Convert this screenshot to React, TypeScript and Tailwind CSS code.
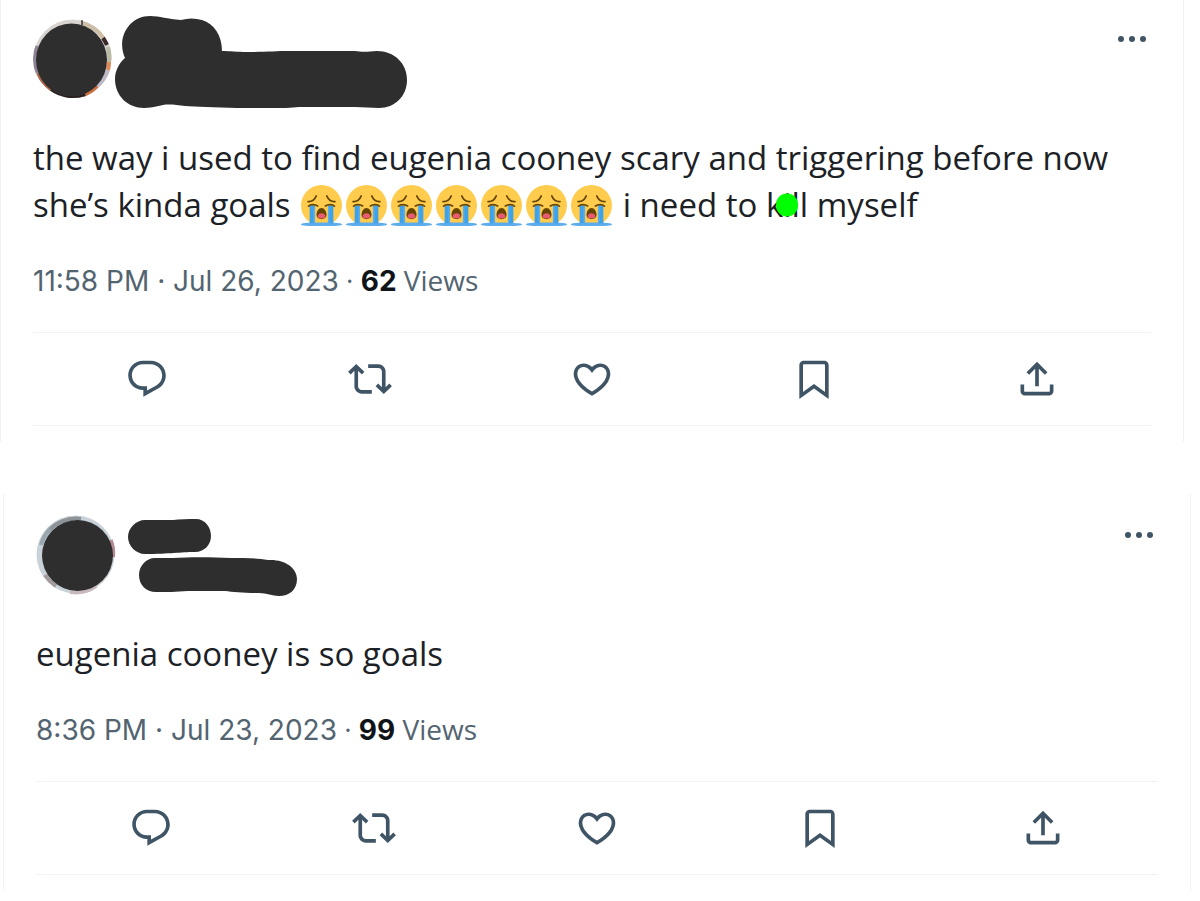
import React from "react";

const ICONS = {
  reply:
    "M1.751 10c0-4.42 3.584-8 8.005-8h4.366c4.49 0 8.129 3.64 8.129 8.13 0 2.96-1.607 5.68-4.196 7.11l-8.054 4.46v-3.69h-.067c-4.49.1-8.183-3.51-8.183-8.01zm8.005-6c-3.317 0-6.005 2.69-6.005 6 0 3.37 2.77 6.08 6.138 6.01l.351-.01h1.761v2.3l5.087-2.81c1.951-1.08 3.163-3.13 3.163-5.36 0-3.39-2.744-6.13-6.129-6.13H9.756z",
  repost:
    "M4.5 3.88l4.432 4.14-1.364 1.46L5.5 7.55V16c0 1.1.896 2 2 2H13v2H7.5c-2.209 0-4-1.79-4-4V7.55L1.432 9.48.068 8.02 4.5 3.88zM16.5 6H11V4h5.5c2.209 0 4 1.79 4 4v8.45l2.068-1.93 1.364 1.46-4.432 4.14-4.432-4.14 1.364-1.46 2.068 1.93V8c0-1.1-.896-2-2-2z",
  like: "M16.697 5.5c-1.222-.06-2.679.51-3.89 2.16l-.805 1.09-.806-1.09C9.984 6.01 8.526 5.44 7.304 5.5c-1.243.07-2.349.78-2.91 1.91-.552 1.12-.633 2.78.479 4.82 1.074 1.97 3.257 4.27 7.129 6.61 3.87-2.34 6.052-4.64 7.126-6.61 1.111-2.04 1.03-3.7.477-4.82-.561-1.13-1.666-1.84-2.908-1.91zm4.187 7.69c-1.351 2.48-4.001 5.12-8.379 7.67l-.503.3-.504-.3c-4.379-2.55-7.029-5.19-8.382-7.67-1.36-2.5-1.41-4.86-.514-6.67.887-1.79 2.647-2.91 4.601-3.01 1.651-.09 3.368.56 4.798 2.01 1.429-1.45 3.146-2.1 4.796-2.01 1.954.1 3.714 1.22 4.601 3.01.896 1.81.846 4.17-.514 6.67z",
  bookmark:
    "M4 4.5C4 3.12 5.119 2 6.5 2h11C18.881 2 20 3.12 20 4.5v18.44l-8-5.71-8 5.71V4.5zM6.5 4c-.276 0-.5.22-.5.5v14.56l6-4.29 6 4.29V4.5c0-.28-.224-.5-.5-.5h-11z",
  share:
    "M12 2.59l5.7 5.7-1.41 1.42L13 6.41V16h-2V6.41l-3.3 3.3-1.41-1.42L12 2.59zM21 15l-.02 3.51c0 1.38-1.12 2.49-2.5 2.49H5.5C4.11 21 3 19.88 3 18.5V15h2v3.5c0 .28.22.5.5.5h12.98c.28 0 .5-.22.5-.5L19 15h2z",
};

const ACTIONS = [
  { label: "Reply", path: ICONS.reply },
  { label: "Repost", path: ICONS.repost },
  { label: "Like", path: ICONS.like },
  { label: "Bookmark", path: ICONS.bookmark },
  { label: "Share", path: ICONS.share },
];

const SobEmoji: React.FC = () => (
  <svg viewBox="0 0 36 36" role="img" aria-label="loudly crying face" className="mx-[2px] mt-1 inline-block h-[41px] w-[41px] align-top">
    <circle cx="18" cy="18" r="18" fill="#ffcc4d" />
    <path d="M0 34.6C0 33.6 5 33 18 33s18 .6 18 1.6S31 36 18 36 0 35.6 0 34.6z" fill="#5dadec" />
    <path d="M7.6 18h4.6v15.6H7.6zM23.8 18h4.6v15.6h-4.6z" fill="#3ea2ea" />
    <path d="M11 19h1.4v14.4H11zM23.6 19H25v14.4h-1.4z" fill="#5dadec" />
    <path
      d="M6.2 14.6c3 .2 5.8-1.8 7.2-5M29.8 14.6c-3 .2-5.8-1.8-7.2-5M6.6 18.6c1.6-1.9 5.6-1.9 8-.2M29.4 18.6c-1.6-1.9-5.6-1.9-8-.2"
      fill="none"
      stroke="#664500"
      strokeWidth="1.5"
      strokeLinecap="round"
    />
    <path d="M18 20.2c-2.6 0-4.4 3-4.4 6.2 0 2.4 1.8 3.6 4.4 3.6s4.4-1.2 4.4-3.6c0-3.2-1.8-6.2-4.4-6.2z" fill="#664500" />
    <path d="M18 24.8c-2 0-3.4 1.2-3.4 2.6s1.4 2 3.4 2 3.4-.6 3.4-2-1.4-2.6-3.4-2.6z" fill="#e75a70" />
  </svg>
);

const WarmAvatar: React.FC = () => (
  <svg viewBox="0 0 80 80" className="h-20 w-20 shrink-0 rounded-full" aria-hidden="true">
    <circle cx="39.5" cy="39.5" r="39" fill="#d9d4d0" />
    <g fill="none" strokeWidth="4">
      <path d="M49 4A37 37 0 0 1 71 20" stroke="#cdbfa6" />
      <path d="M70 19A37 37 0 0 1 74 26" stroke="#3a2a26" />
      <path d="M75 28A37 37 0 0 1 76 44" stroke="#b9b9a4" />
      <path d="M76 43A37 37 0 0 1 75 51" stroke="#e08a55" />
      <path d="M75 51A37 37 0 0 1 63 68" stroke="#bdb8c4" />
      <path d="M64 67A37 37 0 0 1 50 76" stroke="#c9703f" />
      <path d="M52 75A37 37 0 0 1 18 70" stroke="#2a2020" />
      <path d="M18 70A37 37 0 0 1 5 54" stroke="#b06a4c" />
      <path d="M4 54A37 37 0 0 1 4 27" stroke="#8f8294" />
      <path d="M49 1v5" stroke="#333" strokeWidth="1.5" />
    </g>
    <ellipse cx="38.5" cy="41" rx="35.5" ry="36.5" fill="#2e2e2e" />
  </svg>
);

const CoolAvatar: React.FC = () => (
  <svg viewBox="0 0 80 80" className="h-20 w-20 shrink-0 rounded-full" aria-hidden="true">
    <circle cx="39.5" cy="39.5" r="39" fill="#c9d2d8" />
    <g fill="none" strokeWidth="4">
      <path d="M11 18A36 36 0 0 1 45 4" stroke="#8d9396" />
      <path d="M5 30A36 36 0 0 1 14 14" stroke="#9aa6ad" />
      <path d="M75 25A37 37 0 0 1 77 42" stroke="#b58a94" />
      <path d="M20 71A37 37 0 0 1 9 60" stroke="#a39a9c" />
      <path d="M60 71A37 37 0 0 1 34 77" stroke="#c9b9be" />
    </g>
    <circle cx="41.5" cy="40.5" r="35.5" fill="#2e2e2e" />
  </svg>
);

// marker strokes over the display name and handle
const WideMarker: React.FC = () => (
  <svg viewBox="0 0 292 92" className="-mt-[3px] ml-[2px] h-[92px] w-[292px] shrink-0" aria-hidden="true">
    <path
      d="M35 0C45 0 52 3 66 4C73 2 80 2 87 4C99 8 107 19 107 35C115 35 122 36 132 36C150 36 160 35 175 35H240C246 36 252 36 262 35C279 35 292 47 292 64C292 80 280 92 264 92C256 92 248 91 240 91H184C170 93 140 92 122 92C100 91 80 91 70 90C62 89 54 88 48 89C40 91 34 92 29 92C13 92 0 80 0 63C0 55 4 47 10 42C1 22 14 0 35 0z"
      fill="#2e2e2e"
    />
  </svg>
);

const NarrowMarker: React.FC = () => (
  <svg viewBox="0 0 169 78" className="mt-1 ml-3 h-[78px] w-[169px] shrink-0" aria-hidden="true">
    <path
      d="M17 1H45C52 0 60 0 68 0C77 0 83 8 83 17C83 26 76 33 67 33C52 33 42 35 17 35C8 35 0 27 0 18C0 9 8 1 17 1z"
      fill="#2e2e2e"
    />
    <path
      d="M27 39H45C60 38 85 38 102 39C116 39 128 39 140 41C157 40 169 49 169 60C169 71 161 77 151 77C144 77 139 74 131 74C115 74 105 73 97 72H60C48 73 38 73 28 73C18 73 11 66 11 56C11 47 18 39 27 39z"
      fill="#2e2e2e"
    />
  </svg>
);

type TweetProps = {
  className: string;
  avatar: React.ReactNode;
  marker: React.ReactNode;
  children: React.ReactNode;
  time: string;
  date: string;
  views: number;
};

const Tweet: React.FC<TweetProps> = ({ className, avatar, marker, children, time, date, views }) => (
  <article className={`border-x border-[#eff3f4] px-8 pb-4 ${className}`}>
    <header className="flex h-20 items-start">
      {avatar}
      {marker}
      <button type="button" aria-label="More" className="ml-auto h-10 w-[38px] text-[#3f5565]">
        <svg viewBox="0 0 38 40" className="h-10 w-[38px]" fill="currentColor">
          <circle cx="8" cy="20" r="3" />
          <circle cx="19" cy="20" r="3" />
          <circle cx="30" cy="20" r="3" />
        </svg>
      </button>
    </header>

    <p className="mt-[35px] text-[33px] leading-[47px] text-[#1c2126]">{children}</p>

    <div className="mt-[34px] text-[28px] leading-9 text-[#536471]">
      <a href="#status" className="font-['Inter','Liberation_Sans',sans-serif]">
        {time} · {date}
      </a>
      {" · "}
      <span className="font-['Inter','Liberation_Sans',sans-serif] font-bold text-[#0f1419]">{views}</span> Views
    </div>

    <div className="mt-[33px] flex justify-around border-y border-[#eff3f4] px-[3px] py-6">
      {ACTIONS.map((action) => (
        <button key={action.label} type="button" aria-label={action.label} className="text-[#3f5565]">
          <svg viewBox="0 0 24 24" className="h-11 w-11" fill="currentColor">
            <path d={action.path} />
          </svg>
        </button>
      ))}
    </div>
  </article>
);

const App: React.FC = () => {
  return (
    <main className="bg-white font-['Open_Sans','Noto_Sans',sans-serif]">
      <Tweet
        className="mr-4 pt-[19px]"
        avatar={<WarmAvatar />}
        marker={<WideMarker />}
        time="11:58 PM"
        date="Jul 26, 2023"
        views={62}
      >
        the way i used to find eugenia cooney scary and triggering before now she’s kinda goals{" "}
        {Array.from({ length: 7 }, (_, i) => (
          <SobEmoji key={i} />
        ))}{" "}
        i need to{" "}
        <span className="relative">
          kill
          <span className="absolute top-1/2 left-1/2 h-[23px] w-[22px] -translate-x-1/2 -translate-y-1/2 rounded-full bg-[#00ff00]" />
        </span>{" "}
        myself
      </Tweet>

      <Tweet
        className="mt-[52px] mr-[9px] ml-[3px] pt-[21px]"
        avatar={<CoolAvatar />}
        marker={<NarrowMarker />}
        time="8:36 PM"
        date="Jul 23, 2023"
        views={99}
      >
        eugenia cooney is so goals
      </Tweet>
    </main>
  );
};

export default App;
